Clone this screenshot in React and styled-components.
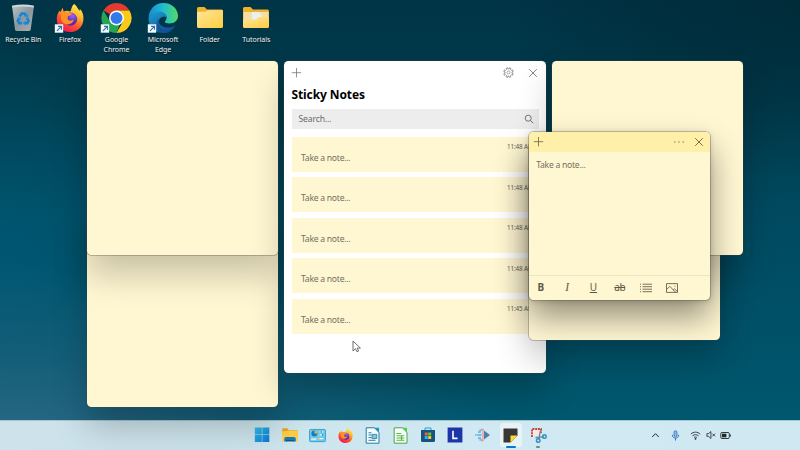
import React from 'react';
import styled, { createGlobalStyle, css } from 'styled-components';

const Global = createGlobalStyle`
  * { box-sizing: border-box; }
  html, body { margin: 0; padding: 0; overflow: hidden; }
  body { font-family: "Noto Sans", "Open Sans", sans-serif; }
  svg { display: block; flex: none; }
`;

const Desktop = styled.main`
  position: relative;
  display: flex;
  flex-direction: column;
  justify-content: space-between;
  width: 800px;
  height: 450px;
  overflow: hidden;
  background:
    radial-gradient(ellipse 520px 190px at 0% 100%, rgba(58, 110, 140, .8), rgba(38, 100, 128, .5) 50%, transparent),
    radial-gradient(ellipse 220px 220px at 0% 58%, rgba(0, 96, 128, .55), transparent),
    radial-gradient(ellipse 300px 180px at 100% 0%, rgba(0, 36, 48, .6), transparent),
    linear-gradient(180deg, #003446 0%, #003b4c 22%, #004a60 48%, #005067 70%, #00586f 94%);
`;

const Shortcuts = styled.nav`
  display: flex;
  padding-top: 2px;
`;

const Shortcut = styled.div`
  display: flex;
  flex-direction: column;
  align-items: center;
  width: 46.6px;
  gap: 1.4px;
`;

const ShortcutLabel = styled.span`
  width: 46px;
  font: 7px/10px "Noto Sans", sans-serif;
  letter-spacing: -.06px;
  text-align: center;
  color: #f2f6f8;
  white-space: pre-line;
  text-shadow: 0 1px 1px rgba(0, 0, 0, .7);
`;

const Window = styled.section`
  position: absolute;
  left: ${p => p.$x}px;
  top: ${p => p.$y}px;
  width: ${p => p.$w}px;
  height: ${p => p.$h}px;
  display: flex;
  flex-direction: column;
  overflow: hidden;
  border-radius: 4.5px;
  background: ${p => (p.$white ? '#fff' : '#fff6d2')};
  box-shadow: ${p => (p.$active
    ? '0 0 0 .8px rgba(80,78,60,.42), 0 17px 32px rgba(0,0,0,.42), 0 1px 6px rgba(0,0,0,.16)'
    : '0 0 0 .7px rgba(60,70,65,.4), 0 19px 34px rgba(0,0,0,.22)')};
`;

const ListBar = styled.header`
  display: flex;
  align-items: center;
  height: 23.5px;
  padding: 0 8px 0 6px;
  color: #777;
`;

const Spacer = styled.span`
  flex: 1;
`;

const BarGap = styled.span`
  width: ${p => p.$w}px;
`;

const Title = styled.h1`
  margin: 0 0 0 7.5px;
  height: 24.5px;
  font: 700 12px/19px "Noto Sans", sans-serif;
  letter-spacing: -.1px;
  color: #000;
`;

const SearchBox = styled.div`
  display: flex;
  align-items: center;
  justify-content: space-between;
  height: 20px;
  margin: 0 7.5px 8px;
  padding: 0 4.5px 0 7px;
  background: #ededed;
  font-size: 8.6px;
  letter-spacing: -.15px;
  color: #6a6a6a;
`;

const NoteList = styled.div`
  display: flex;
  flex-direction: column;
  gap: 5.4px;
  padding: 0 7.5px;
`;

const NoteCard = styled.article`
  position: relative;
  height: 35px;
  padding: 14px 9px 0 9.5px;
  border-radius: 1px;
  background: #fff6d2;
`;

const placeholder = css`
  font: 8.6px/14px "Noto Sans", sans-serif;
  letter-spacing: -.26px;
  color: #74705f;
`;

const NoteText = styled.div`
  ${placeholder}
`;

const Timestamp = styled.time`
  position: absolute;
  top: 5.4px;
  left: 215.5px;
  font-size: 6.3px;
  line-height: 10px;
  letter-spacing: -.12px;
  color: #686455;
  white-space: nowrap;
`;

const NoteBar = styled.header`
  display: flex;
  align-items: center;
  height: 19.5px;
  padding: 0 5.4px 0 3px;
  background: #fff0a9;
  color: #69613d;
`;

const NoteBody = styled.div`
  ${placeholder}
  flex: 1;
  padding: 6.5px 7.2px;
`;

const FormatBar = styled.footer`
  display: flex;
  align-items: center;
  height: 25px;
  gap: 12.3px;
  padding-left: 4.8px;
  border-top: 1px solid #eee5c3;
  color: #5e5a47;
`;

const FormatButton = styled.span`
  display: flex;
  align-items: center;
  justify-content: center;
  width: 14px;
  height: 16px;
  font: ${p => (p.$italic ? 'italic' : 'normal')} ${p => (p.$bold ? 700 : 400)} ${p => (p.$italic ? 11.5 : 10)}px/15px
    ${p => (p.$italic ? '"Liberation Serif", serif' : '"Noto Sans", sans-serif')};
  letter-spacing: ${p => (p.$tight ? '-.5px' : 'normal')};
  text-decoration: ${p => p.$line || 'none'};
  text-decoration-thickness: 1px;
`;

const Taskbar = styled.footer`
  display: flex;
  align-items: center;
  height: 30px;
  padding-left: 248.5px;
  background: linear-gradient(90deg, #cde2ea 0, #cce3eb 25%, #d0e9f2 60%, #d0e8f1 100%);
  border-top: 1px solid #a3c6d1;
`;

const TaskButton = styled.div`
  display: flex;
  align-items: center;
  justify-content: center;
  position: relative;
  width: 27.6px;
  height: 30px;
  padding-bottom: 1px;
`;

const ActiveTile = styled.span`
  display: flex;
  align-items: center;
  justify-content: center;
  width: 22px;
  height: 24px;
  border-radius: 2.5px;
  background: #e8f3f7;
`;

const Indicator = styled.i`
  position: absolute;
  bottom: 3px;
  width: ${p => (p.$active ? 10 : 4)}px;
  height: 2px;
  border-radius: 1px;
  background: ${p => (p.$active ? '#0878ca' : '#77858b')};
`;

const Tray = styled.div`
  display: grid;
  grid-template-columns: 20px 20px 20px 10px 20px;
  justify-items: center;
  align-items: center;
  margin-left: 93.9px;
  padding-bottom: 1px;
  color: #20292d;
`;

const Pointer = styled.svg`
  position: absolute;
  left: 352px;
  top: 339.5px;
`;

const Art = ({ size = 32, box = 32, children }) => (
  <svg width={size} height={size} viewBox={`0 0 ${box} ${box}`} fill="none">{children}</svg>
);

const ShortcutArrow = () => (
  <g>
    <rect x=".8" y="22.3" width="8.4" height="8.4" fill="#f4f8fb" />
    <path d="M3 28.8 7.2 24.6M4 24.3h3.5v3.5" stroke="#2478a8" strokeWidth="1.2" />
  </g>
);

const RecycleBin = () => (
  <Art>
    <defs>
      <linearGradient id="bin" x2="1" y2="1">
        <stop stopColor="#b8c2c6" /><stop offset=".5" stopColor="#8b979e" /><stop offset="1" stopColor="#aab1b4" />
      </linearGradient>
    </defs>
    <path d="M5 3.7 8 27.5Q8.3 29 10 29h11.5q1.9 0 2.2-1.6L27 3.7Z" fill="url(#bin)" />
    <path d="M5 3.7Q16 1.2 27 3.7l-.3 1.8Q16 3.5 5.2 5.5Z" fill="#d1d8db" />
    <g transform="translate(2.3 2)scale(.85)">
      <path d="m12.2 14.8 2.4-3.6h3.3l2.3 3.3M20.7 16.4l2 3.3-1.5 2.8h-3.5M15 22.5h-3.3L10 19.7l1.8-3" stroke="#1683d4" strokeWidth="3" />
      <path d="m18.2 14.7 4.2 1.4.2-4.4ZM18.8 19.5v5.8l-3.2-2.9ZM9.1 16.5l4-2 .6 4.5Z" fill="#2493df" />
    </g>
  </Art>
);

const FirefoxArt = () => (
  <>
    <defs>
      <linearGradient id="fx" x1=".8" y1="0" x2=".3" y2="1">
        <stop stopColor="#fff14c" /><stop offset=".36" stopColor="#ffb52b" />
        <stop offset=".65" stopColor="#ff542d" /><stop offset="1" stopColor="#ee1758" />
      </linearGradient>
      <radialGradient id="fp" cx=".65" cy=".25">
        <stop stopColor="#9a61ff" /><stop offset="1" stopColor="#582ca9" />
      </radialGradient>
    </defs>
    <path d="M20.2 2c3.2 2.4 3.5 5.2 5.7 7.1l-.2-2.3c3.1 3 4 6.6 3.7 10.6C29 25.4 23.1 30 16 30 8.6 30 3 24.9 2.8 17.7c-.1-3.8 1-6.8 2.7-9.2l.7 2.1 2.5-4.8.9 3.9c1.9-1.1 4.2-1.3 6.3-.2 2-.8.7-4.6 4.3-7.5Z" fill="url(#fx)" />
    <circle cx="16.5" cy="17.2" r="6.6" fill="url(#fp)" />
    <path d="M6 10c3-.9 5.6-.1 7.5 1l4.5.2c-.3 2-2.5 2.2-4 2.8l-.5 3c1.2 2.2 4.6 2 6.2.5-.4 4.9-7.9 6.6-11.4 2.2C6 17 8 14 6 10Z" fill="#ff9225" />
  </>
);

const ChromeArt = () => (
  <Art>
    <path d="M16.5 16 3.5 8.5a15 15 0 0 1 26 0h-13Z" fill="#e53b2f" />
    <path d="M16.5 8.5h13a15 15 0 0 1-13 22.5L23 19.7Z" fill="#fbc917" />
    <path d="M16.5 31a15 15 0 0 1-13-22.5L10 19.7l9.5 3.3Z" fill="#24a653" />
    <circle cx="16.5" cy="16" r="7.5" fill="#fff" /><circle cx="16.5" cy="16" r="6" fill="#3478e9" />
    <ShortcutArrow />
  </Art>
);

const EdgeArt = () => (
  <Art>
    <defs>
      <linearGradient id="eg" x1="0" y1=".4" x2="1" y2=".4">
        <stop stopColor="#168bd4" /><stop offset=".5" stopColor="#21bed0" /><stop offset="1" stopColor="#53db63" />
      </linearGradient>
      <linearGradient id="eb" x2=".6" y2="1"><stop stopColor="#1da4d2" /><stop offset="1" stopColor="#114d9c" /></linearGradient>
    </defs>
    <path d="M1.5 17C1.5 7.2 8 1 16.3 1 25.5 1 31 7.5 31 13.8c0 5.2-4 7.7-8.7 7.7-2.8 0-4.5-.8-4.5-1.7 0-1 1.8-1.5 1.8-4.1 0-3.2-3.2-5.7-7.1-5.7C6.8 10 3.1 13 1.5 17Z" fill="url(#eg)" />
    <path d="M1.5 17c1.5-4.8 6-8 11.2-7.4 4 .4 6.9 3.1 6.9 6.1-1.4-1.6-5.1-1.4-6.8 1-3.9 5.6 4.8 12.1 15.7 7C24.7 29.2 20 31 16 31 8 31 1.8 25 1.5 17Z" fill="url(#eb)" />
    <path d="M12 17c-2 6 3 12.5 12 12.5-3 1.5-7 2-10.5 1.2C8 26 9 19 12 17Z" fill="#164f93" opacity=".8" />
    <ShortcutArrow />
  </Art>
);

const FolderArt = ({ document = false }) => (
  <Art>
    <defs>
      <linearGradient id="folder" x2="1" y2="1"><stop stopColor="#ffe69a" /><stop offset="1" stopColor="#ffcc40" /></linearGradient>
    </defs>
    <path d="M3 6.5Q3 5 4.5 5h6l2.5 2.5h14.5Q29 7.5 29 9v15.5H3Z" fill="#efb22d" />
    {document && <path d="M3.5 10h25v10h-25Z" fill="#f4dfa7" />}
    {document && <path d="M12 10h7l2.5 3v7H12Z" fill="#e8f0f2" />}
    {document
      ? <path d="M3 17.5h13l3-2.5h10v9.5Q29 26 27.5 26h-23Q3 26 3 24.5Z" fill="url(#folder)" />
      : <path d="M3 9.8h8.5l2-1.5H29v16.2Q29 26 27.5 26h-23Q3 26 3 24.5Z" fill="url(#folder)" />}
  </Art>
);

const Plus = () => <Art size={13} box={13}><path d="M6.5 2v9.4M1.8 6.7h9.4" stroke="currentColor" strokeWidth=".8" /></Art>;
const Close = () => <Art size={10} box={10}><path d="m1.2 1.2 7.6 7.6m0-7.6L1.2 8.8" stroke="currentColor" strokeWidth=".9" /></Art>;
const Gear = () => (
  <Art size={11} box={11}>
    <path d="m4.5.7.3 1.2h1.4L6.5.7l1.4.6-.5 1.1 1 1 1.2-.5.6 1.5-1.2.5v1.3l1.2.5-.6 1.5-1.2-.5-1 1 .5 1.1-1.4.6-.5-1.2H4.8l-.3 1.2-1.4-.6.4-1.1-1-1-1.1.5-.6-1.5L2 6.2V4.9L.8 4.4l.6-1.5 1.1.5 1-1-.4-1.1Z" stroke="currentColor" strokeWidth=".75" />
    <circle cx="5.5" cy="5.5" r="1.5" stroke="currentColor" strokeWidth=".6" />
  </Art>
);
const Search = () => <Art size={10} box={10}><circle cx="4.2" cy="4.2" r="3" stroke="currentColor" strokeWidth=".9" /><path d="m6.4 6.4 2.8 2.8" stroke="currentColor" strokeWidth="1" /></Art>;
const More = () => <Art size={12} box={12}><path d="M1.2 6h1.2m3 0h1.2m3 0h1.2" stroke="currentColor" strokeWidth="1.2" /></Art>;
const ListIcon = () => <Art size={12} box={12}><path d="M0 2.2h1m1.5 0H12M0 4.7h1m1.5 0H12M0 7.2h1m1.5 0H12M0 9.7h1m1.5 0H12" stroke="currentColor" strokeWidth=".85" /></Art>;
const ImageIcon = () => <Art size={12} box={12}><path d="M.5 1.6h11v8.8H.5ZM.8 7.3l3-3 5.8 6m-2.4-2.2 1.3-1.3 2.8 2.7" stroke="currentColor" strokeWidth=".85" /><circle cx="9" cy="4" r=".6" fill="currentColor" /></Art>;

const StartIcon = () => (
  <Art size={16} box={16}>
    <defs><linearGradient id="win" x2="1" y2="1"><stop stopColor="#36bdea" /><stop offset="1" stopColor="#0678cf" /></linearGradient></defs>
    <path d="M.8.6h7v7h-7Zm7.5 0h7v7h-7ZM.8 8.1h7v7h-7Zm7.5 0h7v7h-7Z" fill="url(#win)" />
  </Art>
);
const ExplorerIcon = () => (
  <Art size={16} box={16}>
    <path d="M.3 1.2h5l1.5 2H15q.8 0 .8.8v4H.3Z" fill="#e5a61d" /><path d="M.3 4.5 6 3.8h9.8v10.7H.3Z" fill="#ffce43" />
    <path d="M2.3 14.5V11.7Q2.3 10 4 10h8q1.8 0 1.8 1.7v2.8Z" fill="#167bb8" /><path d="M4.5 14.5v-1h7v1" stroke="#15508a" />
  </Art>
);
const ControlIcon = () => (
  <Art size={17} box={16}>
    <rect x=".5" y="2.3" width="15" height="11.5" rx="1" fill="#6bcaf0" stroke="#268fbb" strokeWidth=".7" />
    <circle cx="5.1" cy="6.2" r="2.8" fill="#137cc2" /><path d="M5.1 6.2V3.4A2.8 2.8 0 0 1 7.9 6.2Z" fill="#ffaf32" />
    <path d="M10 4.5h3.5M10 7.5h3.5M9.5 11h4" stroke="#e8f9ff" strokeWidth="1.2" /><path d="M11.5 3.7v1.6M12.8 6.7v1.6" stroke="#267ba6" />
    <path d="M2 11.5h5" stroke="#d0edf7" strokeWidth="1.8" /><circle cx="9.2" cy="10.8" r="1" fill="#ffc24e" />
  </Art>
);
const WriterIcon = ({ green = false }) => (
  <Art size={17} box={17}>
    <path d="M2.2.8h8.2L15 5.4v10.8H2.2Z" fill="#f8fcfd" stroke={green ? '#43ac3e' : '#217ba7'} strokeWidth="1" />
    <path d="M10.2.8H15v4.7Z" fill={green ? '#58ce3b' : '#2493c6'} />
    {green
      ? <path d="M4.5 6.5h4.8M4.5 8.8h7.8M4.5 11h7.8M4.5 13.2h7.8M9.5 8.2v5.5" stroke="#58b440" strokeWidth="1.1" />
      : <><path d="M4.5 5.8h3M4.5 8h3M4.5 10.6h3M4.5 13.3h7" stroke="#237ca7" /><path d="M8 7.4h4.8v4.2H8Z" fill="#82c6de" stroke="#237ca7" strokeWidth=".8" /></>}
  </Art>
);
const StoreIcon = () => (
  <Art size={16} box={16}>
    <path d="M5 4V1h6v3" stroke="#18a5d2" /><path d="M1 3h14v10.5q0 1.5-1.5 1.5h-11Q1 15 1 13.5Z" fill="#165381" />
    <path d="M4.7 5.5h3v3h-3Z" fill="#f1643a" /><path d="M8.2 5.5h3v3h-3Z" fill="#73c72b" /><path d="M4.7 9h3v3h-3Z" fill="#28b6ed" /><path d="M8.2 9h3v3h-3Z" fill="#ffc62b" />
  </Art>
);
const LIcon = () => <Art size={16} box={16}><path d="M.6.5h14.8v15H.6Z" fill="#1c36a6" /><path d="M6 3.8v7.6h4.5" stroke="#fff" strokeWidth="1.6" /></Art>;
const AudioIcon = () => (
  <Art size={16} box={16}>
    <path d="M1.6 8h5M3 5h3M3 11h3M0 8h1M4.3 3.2H7M4.3 12.8H7" stroke="#5faee1" strokeWidth="1.3" /><path d="M6 2.2h2v11.6H6" stroke="#ee8c82" strokeWidth="1.1" />
    <path d="m9 3.5 6 4.5-6 4.5Z" fill="#537eac" />
  </Art>
);
const StickyIcon = () => <Art size={15} box={15}><path d="M.5.5h14v7L7.5 14.5h-7Z" fill="#383735" /><path d="M7.5 14.5V7.5h7Z" fill="#ffd538" /></Art>;
const SnipIcon = () => (
  <Art size={17} box={17}>
    <path d="M2 10V2h9v4" fill="#f6e9e5" stroke="#c74137" strokeWidth="1.8" strokeDasharray="2 .8" />
    <path d="m10.3 4-1.4 8M5.5 10.5l8.7-.6" stroke="#73868f" strokeWidth="1.4" />
    <circle cx="8.2" cy="13.5" r="1.8" stroke="#2492c5" strokeWidth="1.4" /><circle cx="14.4" cy="9.6" r="1.8" stroke="#2492c5" strokeWidth="1.4" />
  </Art>
);

const shortcuts = [
  ['Recycle Bin', <RecycleBin />],
  ['Firefox', <Art><FirefoxArt /><ShortcutArrow /></Art>],
  ['Google\nChrome', <ChromeArt />],
  ['Microsoft\nEdge', <EdgeArt />],
  ['Folder', <FolderArt />],
  ['Tutorials', <FolderArt document />],
];

const apps = [<StartIcon />, <ExplorerIcon />, <ControlIcon />, <Art size={17}><FirefoxArt /></Art>,
  <WriterIcon />, <WriterIcon green />, <StoreIcon />, <LIcon />, <AudioIcon />];

const times = ['11:48 AM', '11:48 AM', '11:48 AM', '11:48 AM', '11:45 AM'];

export default function App() {
  return (
    <>
      <Global />
      <Desktop>
        <Shortcuts>
          {shortcuts.map(([label, icon]) => (
            <Shortcut key={label}>{icon}<ShortcutLabel>{label}</ShortcutLabel></Shortcut>
          ))}
        </Shortcuts>

        <Taskbar>
          {apps.map((icon, i) => <TaskButton key={i}>{icon}</TaskButton>)}
          <TaskButton><ActiveTile><StickyIcon /></ActiveTile><Indicator $active /></TaskButton>
          <TaskButton><SnipIcon /><Indicator /></TaskButton>
          <Tray>
            <Art size={9} box={9}><path d="m1.2 6 3.3-3.3L7.8 6" stroke="currentColor" strokeWidth="1" /></Art>
            <Art size={11} box={11}><rect x="4" y=".7" width="3" height="6" rx="1.5" fill="#8bb9e7" stroke="#3273bd" strokeWidth=".8" /><path d="M2.3 4.8c0 4.4 6.4 4.4 6.4 0M5.5 8.2v2.3" stroke="#3273bd" strokeWidth="1" /></Art>
            <Art size={11} box={11}><path d="M.8 4.1c2.8-2.6 6.6-2.6 9.4 0M2.4 5.9c1.9-1.7 4.3-1.7 6.2 0M4 7.6c1-.8 2-.8 3 0" stroke="currentColor" strokeWidth=".85" /><circle cx="5.5" cy="8.8" r=".9" fill="currentColor" /></Art>
            <Art size={10} box={11}><path d="M1 4h1.7l2.7-2.3v7.6L2.7 7H1Zm6 0 3 3m0-3L7 7" stroke="currentColor" strokeWidth=".9" /></Art>
            <Art size={11} box={11}><rect x=".8" y="2.5" width="8.5" height="6" rx="1.2" stroke="currentColor" strokeWidth=".9" /><path d="M2 3.7h4.4v3.6H2Z" fill="currentColor" /><path d="M10.3 4.5v2" stroke="currentColor" strokeWidth="1" /></Art>
          </Tray>
        </Taskbar>

        <Window $x={87} $y={212} $w={191} $h={194.5} />
        <Window $x={87} $y={61} $w={191} $h={194.4} />
        <Window $x={284} $y={61} $w={262} $h={312} $white>
          <ListBar><Plus /><Spacer /><Gear /><BarGap $w={14.5} /><Close /></ListBar>
          <Title>Sticky Notes</Title>
          <SearchBox><span>Search...</span><Search /></SearchBox>
          <NoteList>
            {times.map((time, i) => (
              <NoteCard key={i}><Timestamp>{time}</Timestamp><NoteText>Take a note...</NoteText></NoteCard>
            ))}
          </NoteList>
        </Window>
        <Window $x={529.4} $y={145} $w={191} $h={195} />
        <Window $x={552} $y={61} $w={191} $h={194.4} />
        <Window $x={529} $y={132} $w={180.5} $h={167.5} $active>
          <NoteBar><Plus /><Spacer /><More /><BarGap $w={9} /><Close /></NoteBar>
          <NoteBody>Take a note...</NoteBody>
          <FormatBar>
            <FormatButton $bold>B</FormatButton>
            <FormatButton $italic>I</FormatButton>
            <FormatButton $line="underline">U</FormatButton>
            <FormatButton $tight $line="line-through">ab</FormatButton>
            <FormatButton><ListIcon /></FormatButton>
            <FormatButton><ImageIcon /></FormatButton>
          </FormatBar>
        </Window>
        <Pointer width="10" height="13" viewBox="0 0 10 13">
          <path d="M1 1v10l2.5-2.3L5 11.8l1.6-.8-1.4-2.9h3.2Z" fill="#fff" stroke="#555" strokeWidth=".85" />
        </Pointer>
      </Desktop>
    </>
  );
}
